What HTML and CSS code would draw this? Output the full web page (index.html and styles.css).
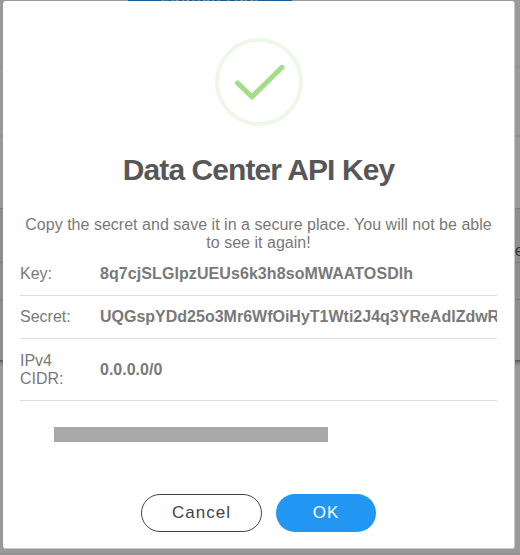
FILE: index.html
```html
<!DOCTYPE html>
<html lang="en">
<head>
  <meta charset="UTF-8">
  <title>Data Center API Key</title>
  <link rel="stylesheet" href="styles.css">
</head>
<body>
  <!-- Page behind the dialog -->
  <div class="page">
    <div class="page-top"><span class="page-btn">Launch App</span></div>
    <div class="page-row"></div>
    <div class="page-row page-row-last"></div>
    <div class="page-table">
      <div class="page-head">Secret</div>
      <div class="page-cell"></div>
    </div>
    <div class="page-bottom"></div>
  </div>

  <div class="modal">
    <svg class="check" width="88" height="88" viewBox="0 0 88 88">
      <circle cx="44" cy="44" r="42" fill="none" stroke="#edf8e7" stroke-width="4"/>
      <path d="M22.5 45L37 58.8L67 29.3" fill="none" stroke="#a5dc86" stroke-width="5" stroke-linecap="round"/>
    </svg>
    <h2>Data Center API Key</h2>
    <p class="message">Copy the secret and save it in a secure place. You will not be able to see it again!</p>
    <div class="keys">
      <div class="key-row">
        <span class="label">Key:</span>
        <strong class="key">8q7cjSLGlpzUEUs6k3h8soMWAATOSDlh</strong>
      </div>
      <div class="key-row">
        <span class="label">Secret:</span>
        <strong>UQGspYDd25o3Mr6WfOiHyT1Wti2J4q3YReAdlZdwR</strong>
      </div>
      <div class="key-row key-row-tall">
        <span class="label">IPv4 CIDR:</span>
        <strong>0.0.0.0/0</strong>
      </div>
    </div>
    <div class="redacted"></div>
    <div class="actions">
      <button class="btn btn-cancel">Cancel</button>
      <button class="btn btn-ok">OK</button>
    </div>
  </div>
</body>
</html>
```
FILE: styles.css
```css
* {
  box-sizing: border-box;
}
body {
  margin: 0;
  height: 555px;
  overflow: hidden;
  background: #999;
  font-family: "Liberation Sans", Arial, sans-serif;
  font-size: 16px;
}

/* dimmed page */
.page-top {
  height: 68px;
  padding-left: 128px;
  border-bottom: 2px solid #919191;
  overflow: hidden;
}
.page-btn {
  display: block;
  width: 164px;
  margin-top: -11px;
  background: #155c98;
  color: #999;
  line-height: 15px;
  text-align: center;
  letter-spacing: 1.5px;
}
.page-row {
  height: 69px;
  border-bottom: 2px solid #919191;
}
.page-row-last {
  height: 72px;
  border-bottom: 1px solid #7b7b7b;
}
.page-table {
  height: 151px;
  background: #8e8e8e;
}
.page-head {
  height: 54px;
  padding: 32px 0 0 504px;
  border-bottom: 1px solid #7b7b7b;
  line-height: 20px;
  white-space: nowrap;
  overflow: hidden;
  color: #333;
}
.page-cell {
  height: 37px;
  border-bottom: 1px solid #7b7b7b;
}
.page-bottom {
  height: 194px;
  background: linear-gradient(#555, #858585 3px, #999 7px);
  border-bottom: 1px solid #8c8c8c;
}

/* dialog */
.modal {
  position: absolute;
  top: 1px;
  left: 3px;
  width: 512px;
  height: 548px;
  padding: 37px 17px 0;
  border-right: 1px solid #c8c8c8;
  border-bottom: 1px solid #c8c8c8;
  border-radius: 3px;
  background: #fff;
  color: #797979;
}
.check {
  display: block;
  margin: 0 auto;
}
h2 {
  margin: 24px 0 0;
  font-size: 30px;
  line-height: 40px;
  text-align: center;
  letter-spacing: -0.93px;
  color: #575757;
}
.message {
  margin: 26px 0 0;
  line-height: 18px;
  text-align: center;
  letter-spacing: 0.02px;
}
.keys {
  margin-top: 1px;
}
.key-row {
  display: flex;
  align-items: center;
  height: 43px;
  border-bottom: 1px solid #ddd;
  line-height: 18px;
  overflow: hidden;
  white-space: nowrap;
}
.key-row-tall {
  height: 62px;
}
.label {
  flex: 0 0 80px;
  padding-right: 25px;
  white-space: normal;
}
.key {
  letter-spacing: 0.08px;
}
.redacted {
  width: 274px;
  height: 15px;
  margin: 26px 0 0 34px;
  background: #a8a8a8;
}
.actions {
  display: flex;
  justify-content: center;
  gap: 14px;
  margin-top: 52px;
}
.btn {
  height: 38px;
  padding: 0;
  border: 0;
  border-radius: 19px;
  font: 17px "Liberation Sans", Arial, sans-serif;
  letter-spacing: 1px;
}
.btn-cancel {
  width: 121px;
  border: 1px solid #444;
  background: #fff;
  color: #444;
}
.btn-ok {
  width: 100px;
  background: #2196f3;
  color: #fff;
}
```
